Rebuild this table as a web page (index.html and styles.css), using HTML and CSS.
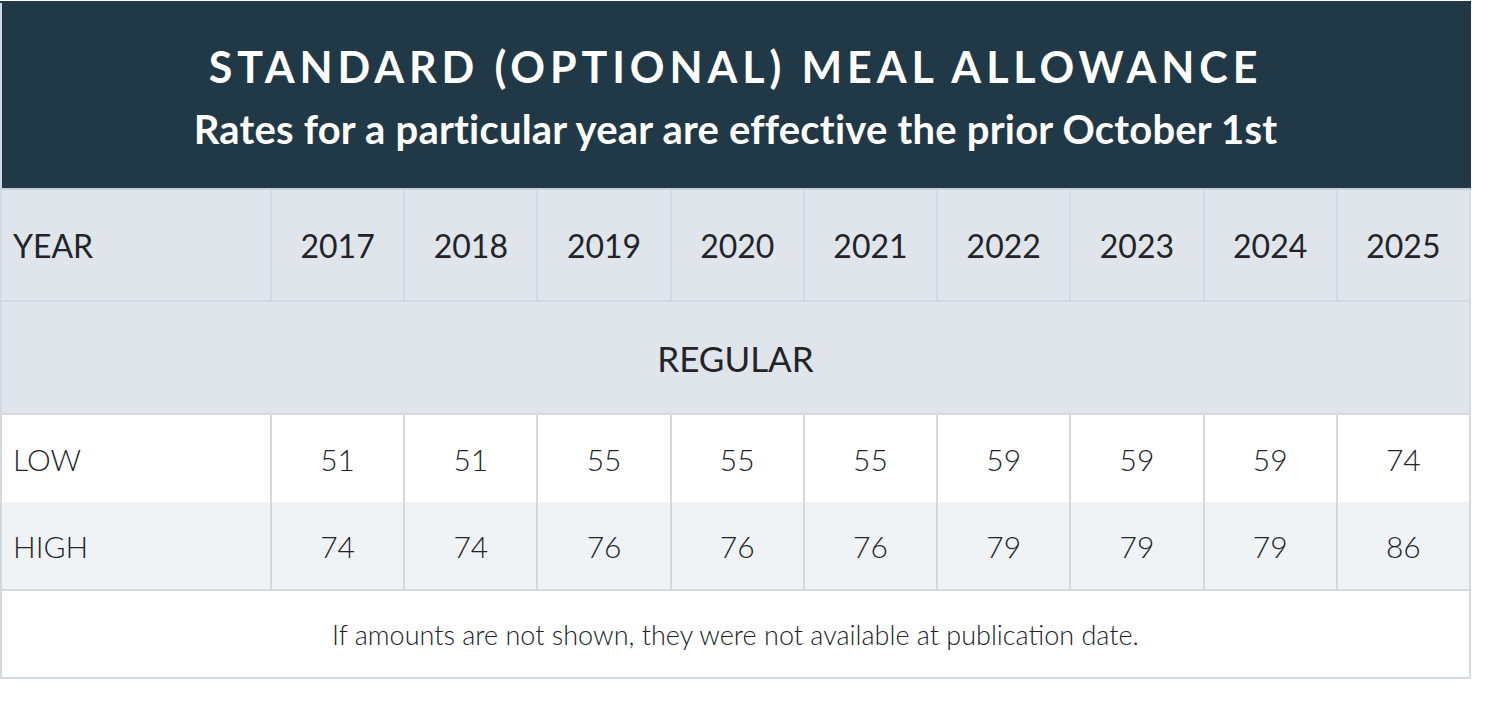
FILE: index.html
```html
<!DOCTYPE html>
<html lang="en">
<head>
<meta charset="utf-8">
<title>Standard (Optional) Meal Allowance</title>
<link rel="stylesheet" href="styles.css">
</head>
<body>
<div class="wrap">
<table class="rates">
  <colgroup>
    <col class="c-label">
    <col><col><col><col><col><col><col><col><col>
  </colgroup>
  <thead>
    <tr class="title-row">
      <th colspan="10">
        <div class="title">STANDARD (OPTIONAL) MEAL ALLOWANCE</div>
        <div class="subtitle">Rates for a particular year are effective the prior October 1st</div>
      </th>
    </tr>
    <tr class="year-row">
      <th class="label">YEAR</th>
      <th>2017</th><th>2018</th><th>2019</th><th>2020</th><th>2021</th><th>2022</th><th>2023</th><th>2024</th><th>2025</th>
    </tr>
  </thead>
  <tbody>
    <tr class="group-row"><td colspan="10">REGULAR</td></tr>
    <tr class="low-row">
      <td class="label">LOW</td>
      <td>51</td><td>51</td><td>55</td><td>55</td><td>55</td><td>59</td><td>59</td><td>59</td><td>74</td>
    </tr>
    <tr class="high-row">
      <td class="label">HIGH</td>
      <td>74</td><td>74</td><td>76</td><td>76</td><td>76</td><td>79</td><td>79</td><td>79</td><td>86</td>
    </tr>
    <tr class="note-row"><td colspan="10">If amounts are not shown, they were not available at publication date.</td></tr>
  </tbody>
</table>
</div>
</body>
</html>
```
FILE: styles.css
```css
html, body {
  margin: 0;
  padding: 0;
  background: #ffffff;
}
body {
  font-family: "Lato", "Open Sans", sans-serif;
  color: #222428;
}
.wrap {
  padding: 1px 0 0 0;
}
.rates {
  width: 1471px;
  border-collapse: collapse;
  table-layout: fixed;
}
.rates col.c-label {
  width: 270px;
}
.rates th, .rates td {
  border: 2px solid #d2dae1;
  padding: 0;
  text-align: center;
  font-weight: 400;
}
.title-row th {
  background: #213846;
  color: #ffffff;
  height: 185px;
  border-color: #213846;
  border-bottom-color: #c6d0d8;
  border-left-color: #d2dae1;
}
.title {
  font-size: 43px;
  font-weight: 700;
  letter-spacing: 4.9px;
  line-height: 1;
  padding-top: 3px;
}
.subtitle {
  font-size: 40px;
  font-weight: 700;
  letter-spacing: 0.2px;
  line-height: 1;
  margin-top: 21px;
}
.year-row th {
  background: #dfe5eb;
  height: 110px;
  font-size: 32px;
  font-weight: 400;
}
.label {
  text-align: left !important;
  padding-left: 11px !important;
}
.group-row td {
  background: #dfe5eb;
  height: 111px;
  font-size: 35px;
  font-weight: 400;
}
.low-row td {
  background: #ffffff;
  height: 87px;
  font-size: 30px;
  font-weight: 300;
  border-bottom: none;
}
.high-row td {
  background: #f0f3f6;
  height: 87px;
  font-size: 30px;
  font-weight: 300;
  border-top: none;
}
.note-row td {
  background: #ffffff;
  height: 86px;
  font-size: 27px;
  font-weight: 300;
}
```
